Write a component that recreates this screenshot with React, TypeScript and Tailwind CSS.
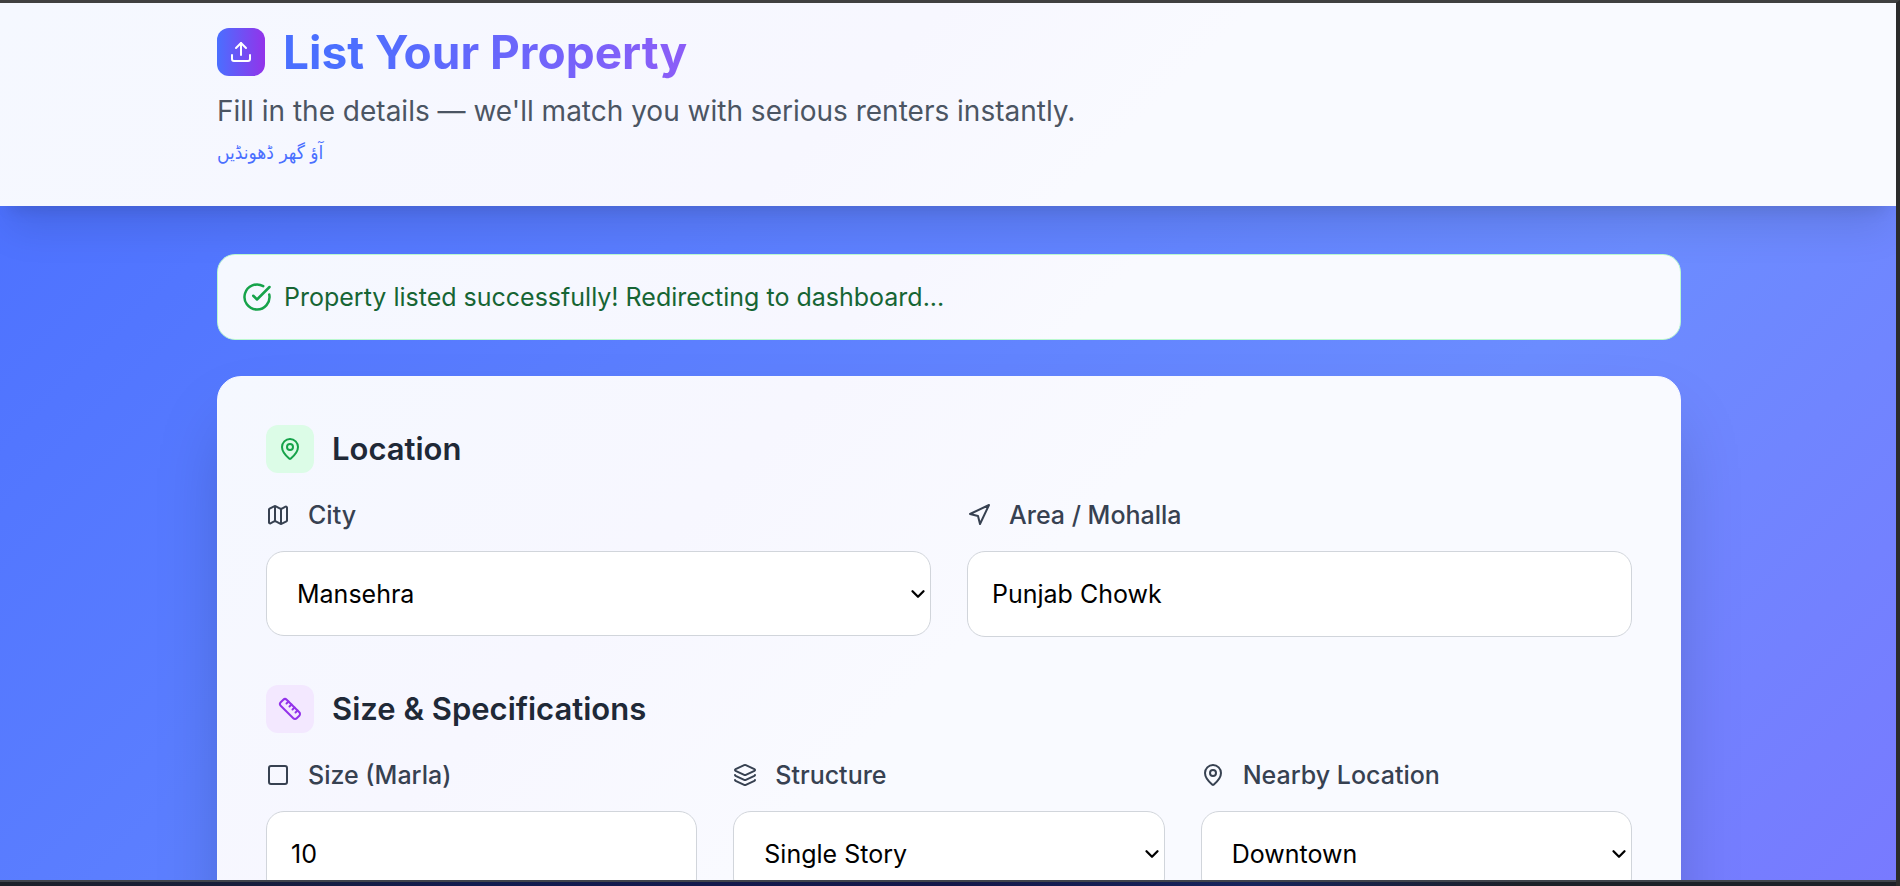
import type { ReactNode } from "react";
import {
  ChevronDown,
  CircleCheckBig,
  Layers,
  Map,
  MapPin,
  Navigation,
  Ruler,
  Square,
  Upload,
  type LucideIcon,
} from "lucide-react";

const controlClass =
  "w-full rounded-[18px] border border-[#d1d5db] bg-white text-[25px] leading-[36px] text-black";

function SectionTitle({ icon: Icon, tone, children }: { icon: LucideIcon; tone: string; children: ReactNode }) {
  return (
    <h2 className="flex items-center gap-[18px] text-[31px] leading-[48px] font-semibold text-[#1f2937]">
      <span className={`flex size-12 items-center justify-center rounded-xl ${tone}`}>
        <Icon className="size-6" />
      </span>
      {children}
    </h2>
  );
}

function Field({ id, label, icon: Icon, children }: { id: string; label: string; icon: LucideIcon; children: ReactNode }) {
  return (
    <div>
      <label
        htmlFor={id}
        className="mb-[18px] flex items-center gap-[18px] text-[25px] leading-[36px] font-medium text-[#374151]"
      >
        <Icon className="size-6" />
        {label}
      </label>
      {children}
    </div>
  );
}

function TextInput({ id, value }: { id: string; value: string }) {
  return <input id={id} type="text" defaultValue={value} className={`${controlClass} h-[86px] px-6`} />;
}

function SelectInput({ id, options }: { id: string; options: string[] }) {
  return (
    <div className="relative">
      <select id={id} className={`${controlClass} block h-[85px] appearance-none pr-12 pl-[30px]`}>
        {options.map((o) => (
          <option key={o}>{o}</option>
        ))}
      </select>
      <ChevronDown
        strokeWidth={2.5}
        className="pointer-events-none absolute inset-y-0 right-0.5 my-auto size-[22px] text-black"
      />
    </div>
  );
}

export default function App() {
  return (
    <div className="flex h-screen flex-col overflow-hidden border-t-3 border-r-4 border-t-[#404040] border-r-[#2b2b2b] font-[Inter,sans-serif]">
      <div className="min-h-0 flex-1 overflow-hidden bg-[linear-gradient(135deg,#4a6fff_0%,#6b8cff_68%,#787aff_100%)]">
        <header className="bg-[linear-gradient(135deg,#f5f8ff_0%,#f7f7ff_45%,#f9faff_60%)] pt-[19px] pb-9 shadow-[0_30px_38px_-8px_rgba(0,0,0,0.1),0_12px_15px_-9px_rgba(0,0,0,0.1)]">
          <div className="mx-auto max-w-[1536px] pr-[35px] pl-[37px]">
            <h1 className="flex items-center gap-[18px] text-[46px] leading-[60px] font-bold">
              <span className="flex size-12 items-center justify-center rounded-xl bg-[linear-gradient(90deg,#4a6fff,#9333ea)] text-white">
                <Upload className="size-6" />
              </span>
              <span className="flex-1 bg-[linear-gradient(90deg,#4a6fff_4%,#8f5cf7_30%)] bg-clip-text text-transparent">
                List Your Property
              </span>
            </h1>
            <p className="mt-2 text-[28px] leading-[42px] text-[#4b5563]">
              Fill in the details — we'll match you with serious renters instantly.
            </p>
            <p lang="ur" className="mt-0.5 font-['DejaVu_Sans_Condensed','DejaVu_Sans',sans-serif] text-[19px] leading-[36px] text-[#4a6fff]">
              <bdi dir="rtl">آؤ گھر ڈھونڈیں</bdi>
            </p>
          </div>
        </header>

        <main className="mx-auto flex max-w-[1536px] flex-col gap-9 pt-12 pr-[35px] pl-[37px]">
          <div
            role="status"
            className="flex items-center gap-3 rounded-[18px] border border-[#b9f8cf] bg-[linear-gradient(135deg,#f5f8ff_0%,#f7f7ff_45%,#f9faff_60%)] p-6 text-[25px] leading-[36px] text-[#166534]"
          >
            <CircleCheckBig className="size-[30px] text-[#16a34a]" />
            Property listed successfully! Redirecting to dashboard...
          </div>

          <form className="flex flex-col gap-12 rounded-3xl border border-[#f8f9ff] bg-[linear-gradient(135deg,#f5f8ff_0%,#f7f7ff_30%,#f9faff_50%)] p-12 shadow-[0_38px_75px_-18px_rgba(0,0,0,0.25)]">
            <section className="flex flex-col gap-6">
              <SectionTitle icon={MapPin} tone="bg-[#dcfce7] text-[#16a34a]">
                Location
              </SectionTitle>
              <div className="grid grid-cols-2 gap-9">
                <Field id="city" label="City" icon={Map}>
                  <SelectInput id="city" options={["Mansehra"]} />
                </Field>
                <Field id="area" label="Area / Mohalla" icon={Navigation}>
                  <TextInput id="area" value="Punjab Chowk" />
                </Field>
              </div>
            </section>
            <section className="flex flex-col gap-6">
              <SectionTitle icon={Ruler} tone="bg-[#f3e8ff] text-[#9333ea]">
                Size &amp; Specifications
              </SectionTitle>
              <div className="grid grid-cols-3 gap-9">
                <Field id="size" label="Size (Marla)" icon={Square}>
                  <TextInput id="size" value="10" />
                </Field>
                <Field id="structure" label="Structure" icon={Layers}>
                  <SelectInput id="structure" options={["Single Story"]} />
                </Field>
                <Field id="nearby" label="Nearby Location" icon={MapPin}>
                  <SelectInput id="nearby" options={["Downtown"]} />
                </Field>
              </div>
            </section>
          </form>
        </main>
      </div>
      <div className="-mr-1 h-[6px] shrink-0 border-t-2 border-t-[#40444c] bg-[linear-gradient(90deg,#1c2028_0%,#121c50_25%,#14184a_50%,#16245c_66%,#1c2028_80%)]" />
    </div>
  );
}
